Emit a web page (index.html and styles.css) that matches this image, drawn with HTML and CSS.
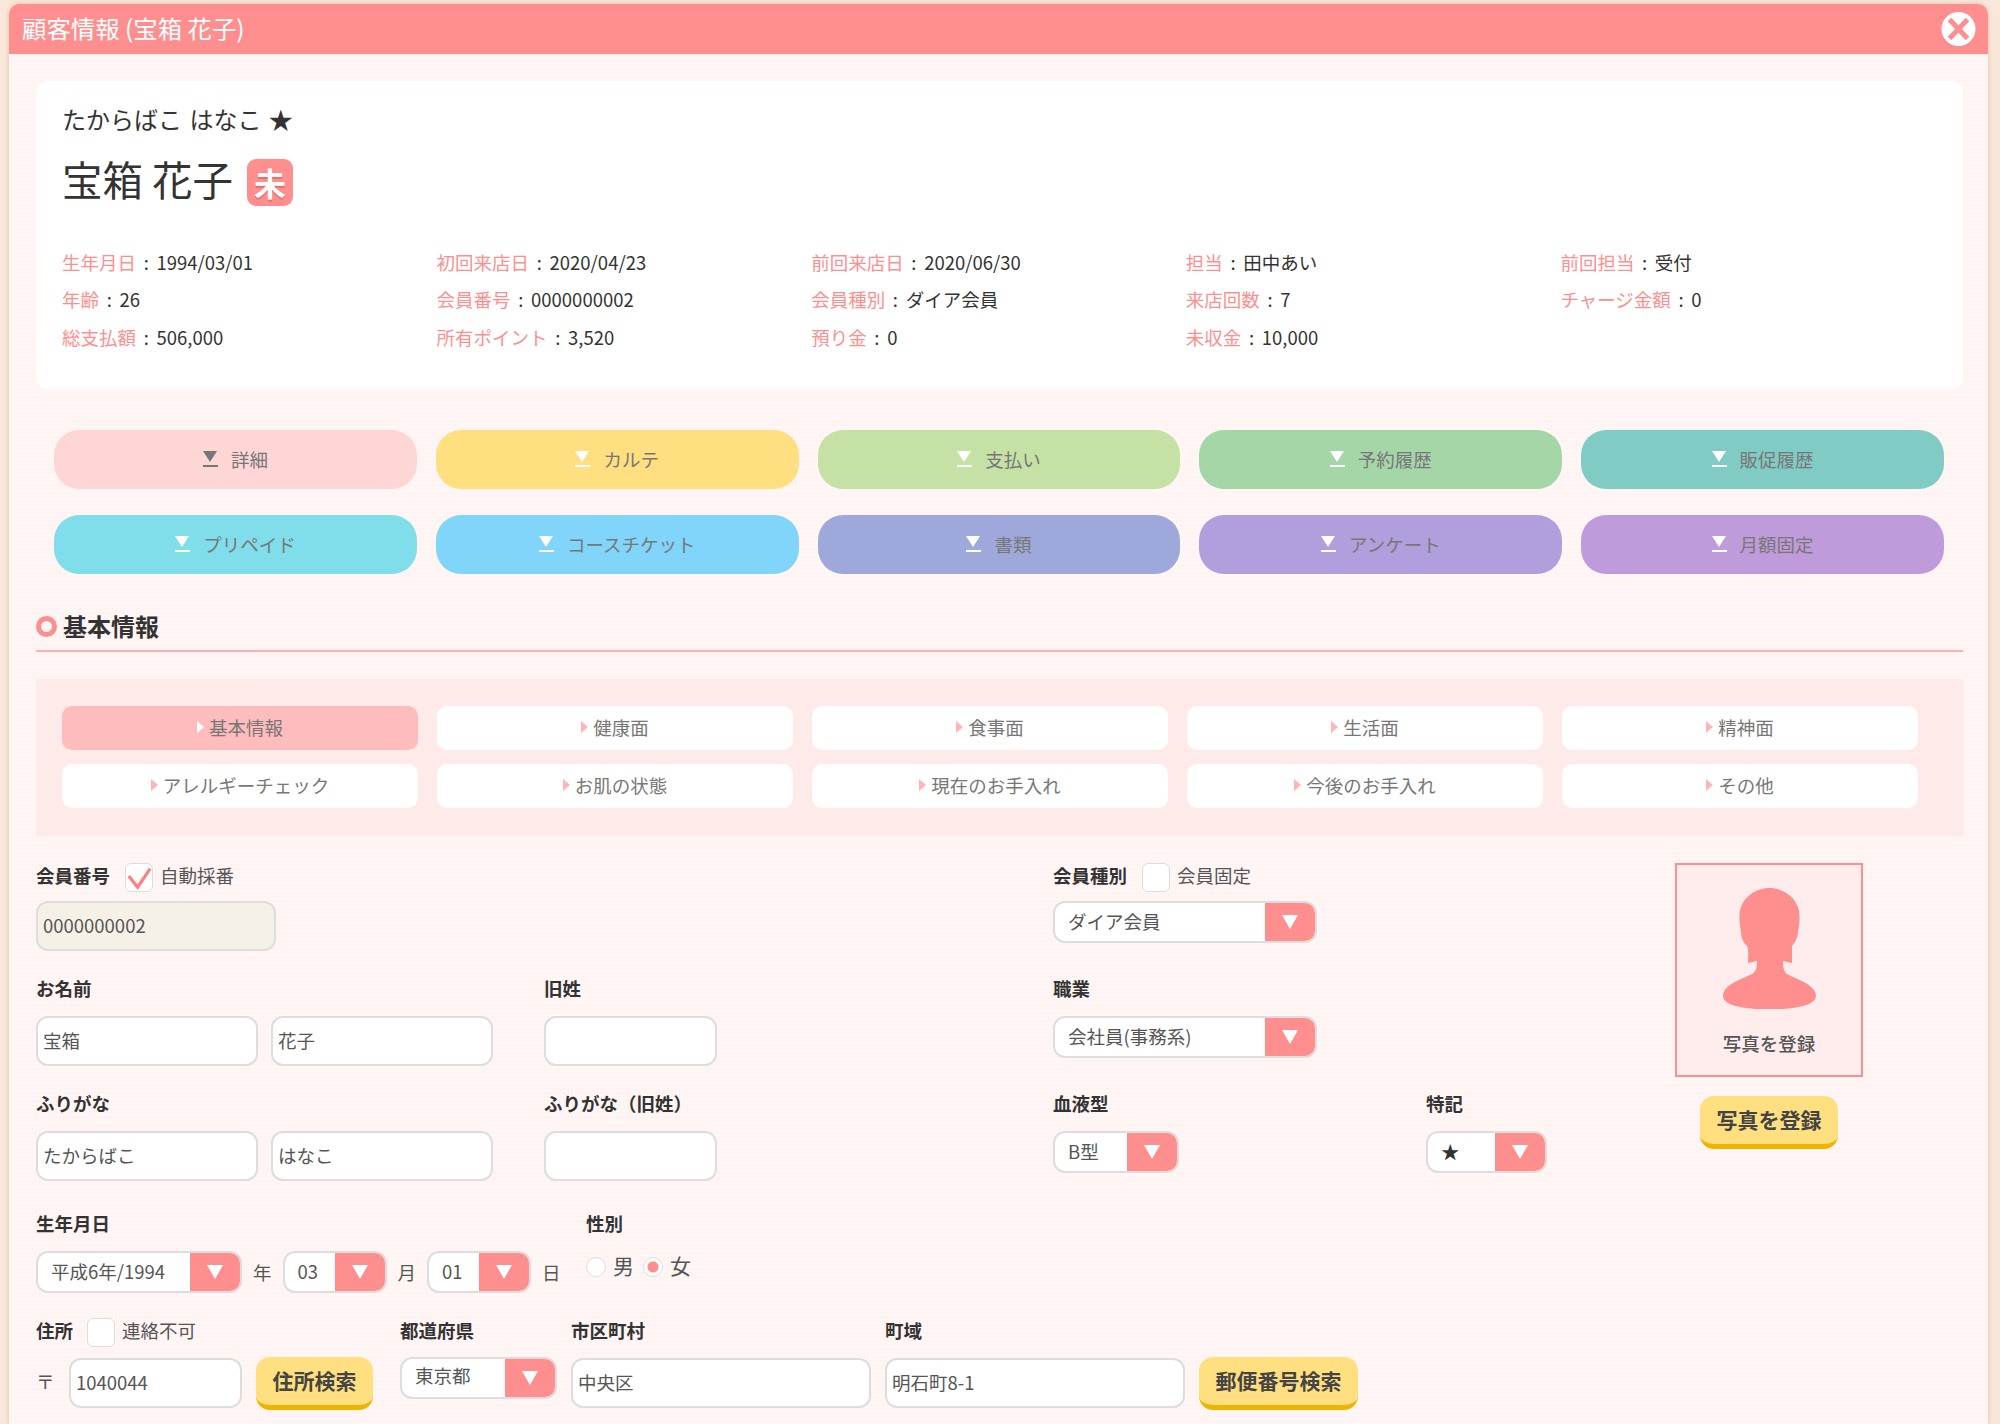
FILE: index.html
```html
<!DOCTYPE html>
<html lang="ja">
<head>
    <meta charset="utf-8">
    <title>顧客情報</title>
    <link rel="stylesheet" href="styles.css">
</head>
<body>

    <div class="modal">
        <div class="modal-head">
            <span class="modal-title">顧客情報 (宝箱 花子)</span>
            <svg class="close-icon" viewBox="0 0 35 34">
                <circle cx="17.5" cy="17" r="17" fill="#fff"/>
                <path d="M8.5 7.5L26.5 26.5M26.5 7.5L8.5 26.5" stroke="#ff8f8f" stroke-width="5" fill="none"/>
            </svg>
        </div>

        <div class="modal-body">
            <!-- customer summary -->
            <div class="summary">
                <div class="kana">たからばこ はなこ ★</div>
                <div class="name"><span class="name-text">宝箱 花子</span><span class="badge">未</span></div>
                <div class="info-grid">
                    <div><span class="key">生年月日</span> : 1994/03/01</div>
                    <div><span class="key">初回来店日</span> : 2020/04/23</div>
                    <div><span class="key">前回来店日</span> : 2020/06/30</div>
                    <div><span class="key">担当</span> : 田中あい</div>
                    <div><span class="key">前回担当</span> : 受付</div>
                    <div><span class="key">年齢</span> : 26</div>
                    <div><span class="key">会員番号</span> : 0000000002</div>
                    <div><span class="key">会員種別</span> : ダイア会員</div>
                    <div><span class="key">来店回数</span> : 7</div>
                    <div><span class="key">チャージ金額</span> : 0</div>
                    <div><span class="key">総支払額</span> : 506,000</div>
                    <div><span class="key">所有ポイント</span> : 3,520</div>
                    <div><span class="key">預り金</span> : 0</div>
                    <div><span class="key">未収金</span> : 10,000</div>
                </div>
            </div>

            <!-- section buttons -->
            <div class="pills">
                <div class="pill pill-pink"><i class="pill-mark"></i>詳細</div>
                <div class="pill pill-yellow"><i class="pill-mark"></i>カルテ</div>
                <div class="pill pill-lime"><i class="pill-mark"></i>支払い</div>
                <div class="pill pill-green"><i class="pill-mark"></i>予約履歴</div>
                <div class="pill pill-teal"><i class="pill-mark"></i>販促履歴</div>
                <div class="pill pill-cyan"><i class="pill-mark"></i>プリペイド</div>
                <div class="pill pill-sky"><i class="pill-mark"></i>コースチケット</div>
                <div class="pill pill-indigo"><i class="pill-mark"></i>書類</div>
                <div class="pill pill-violet"><i class="pill-mark"></i>アンケート</div>
                <div class="pill pill-purple"><i class="pill-mark"></i>月額固定</div>
            </div>

            <h3 class="section-title"><i class="ring"></i>基本情報</h3>

            <div class="tab-panel">
                <div class="tab active">基本情報</div>
                <div class="tab">健康面</div>
                <div class="tab">食事面</div>
                <div class="tab">生活面</div>
                <div class="tab">精神面</div>
                <div class="tab">アレルギーチェック</div>
                <div class="tab">お肌の状態</div>
                <div class="tab">現在のお手入れ</div>
                <div class="tab">今後のお手入れ</div>
                <div class="tab">その他</div>
            </div>

            <div class="form-top">
                <div class="form-rows">
                    <div class="form-row">
                        <div class="cell span-2">
                            <div class="label-line first">
                                <label>会員番号</label>
                                <span class="check">
                                    <svg viewBox="0 0 28 29"><path d="M3 13L12.5 25L26 5" stroke="#ff8080" stroke-width="3.5" fill="none"/></svg>
                                </span>
                                <span class="check-text">自動採番</span>
                            </div>
                            <input class="field field-member" type="text" value="0000000002" readonly>
                        </div>
                        <div class="cell">
                            <div class="label-line first">
                                <label>会員種別</label>
                                <span class="check"></span>
                                <span class="check-text">会員固定</span>
                            </div>
                            <div class="select select-wide"><span>ダイア会員</span><i class="arrow"></i></div>
                        </div>
                    </div>

                    <div class="form-row">
                        <div class="cell">
                            <div class="label-line"><label>お名前</label></div>
                            <div class="pair">
                                <input class="field field-name" type="text" value="宝箱">
                                <input class="field field-name" type="text" value="花子">
                            </div>
                        </div>
                        <div class="cell">
                            <div class="label-line"><label>旧姓</label></div>
                            <input class="field field-old" type="text">
                        </div>
                        <div class="cell span-2">
                            <div class="label-line"><label>職業</label></div>
                            <div class="select select-wide"><span>会社員(事務系)</span><i class="arrow"></i></div>
                        </div>
                    </div>

                    <div class="form-row">
                        <div class="cell">
                            <div class="label-line"><label>ふりがな</label></div>
                            <div class="pair">
                                <input class="field field-name" type="text" value="たからばこ">
                                <input class="field field-name" type="text" value="はなこ">
                            </div>
                        </div>
                        <div class="cell">
                            <div class="label-line"><label>ふりがな（旧姓）</label></div>
                            <input class="field field-old" type="text">
                        </div>
                        <div class="cell">
                            <div class="label-line"><label>血液型</label></div>
                            <div class="select select-blood"><span>B型</span><i class="arrow"></i></div>
                        </div>
                        <div class="cell">
                            <div class="label-line"><label>特記</label></div>
                            <div class="select select-mark"><span>★</span><i class="arrow"></i></div>
                        </div>
                    </div>
                </div>

                <div class="photo-col">
                    <div class="photo-box">
                        <svg class="silhouette" viewBox="0 0 93 121">
                            <path fill="#ff8f8f" d="M46.5 0C60 0 76 10 76.5 27C77 36 75 42 75 44C75 50 71 56 69 58L69 75L60 73C60 80 61 84 64 86C70 90 93 96 93 108C93 115 82 118 70 120C55 122 38 122 23 120C10 118 0 115 0 108C0 96 22 90 29 86C33 84 34 80 34 73L25 75C25 68 26 62 24 58C20 54 18 50 18 44C18 42 16 36 16.5 27C17 10 33 0 46.5 0Z"/>
                        </svg>
                        <div class="photo-text">写真を登録</div>
                    </div>
                    <button class="yellow-btn">写真を登録</button>
                </div>
            </div>

            <div class="birth-row">
                <div>
                    <div class="label-line"><label>生年月日</label></div>
                    <div class="date-line">
                        <div class="select select-year"><span>平成6年/1994</span><i class="arrow"></i></div>
                        <span class="unit">年</span>
                        <div class="select select-day"><span>03</span><i class="arrow"></i></div>
                        <span class="unit">月</span>
                        <div class="select select-day"><span>01</span><i class="arrow"></i></div>
                        <span class="unit">日</span>
                    </div>
                </div>
                <div class="gender">
                    <div class="label-line"><label>性別</label></div>
                    <div class="radio-line">
                        <i class="radio"></i><span>男</span>
                        <i class="radio on"></i><span>女</span>
                    </div>
                </div>
            </div>

            <div class="address-row">
                <div class="addr-main">
                    <div class="label-line">
                        <label>住所</label>
                        <span class="check"></span>
                        <span class="check-text">連絡不可</span>
                    </div>
                    <div class="zip-line">
                        <span class="zip-mark">〒</span>
                        <input class="field field-zip" type="text" value="1040044">
                        <button class="yellow-btn">住所検索</button>
                    </div>
                </div>
                <div class="addr-pref">
                    <div class="label-line"><label>都道府県</label></div>
                    <div class="select select-pref"><span>東京都</span><i class="arrow"></i></div>
                </div>
                <div class="addr-city">
                    <div class="label-line"><label>市区町村</label></div>
                    <input class="field field-city" type="text" value="中央区">
                </div>
                <div class="addr-city">
                    <div class="label-line"><label>町域</label></div>
                    <input class="field field-city" type="text" value="明石町8-1">
                </div>
                <button class="yellow-btn zip-search">郵便番号検索</button>
            </div>
        </div>
    </div>

</body>
</html>
```

FILE: styles.css
```css
html, body {
    height: 1424px;
    overflow: hidden;
}
body {
    margin: 0;
    padding: 4px 12px 0 9px;
    box-sizing: border-box;
    background: #f9e8da;
    font-family: "Noto Sans CJK JP", "Noto Sans", sans-serif;
    font-size: 18.5px;
    color: #333;
}
.modal {
    height: 1420px;
    border-radius: 10px 10px 0 0;
    background-color: #fff3f2;
    background-image:
        repeating-linear-gradient(0deg, rgba(255, 255, 255, 0.2) 0 2px, transparent 2px 4px),
        repeating-linear-gradient(90deg, rgba(255, 255, 255, 0.2) 0 2px, transparent 2px 4px);
    box-shadow: 0 0 5px rgba(205, 140, 95, 0.45);
    overflow: hidden;
}
.modal-head {
    height: 50px;
    padding: 0 12px 0 13px;
    display: flex;
    align-items: center;
    justify-content: space-between;
    background: #ff8f8f;
    color: #fff;
}
.modal-title {
    font-size: 24.4px;
    margin-bottom: 3px;
}
.close-icon {
    width: 35px;
    height: 34px;
}
.modal-body {
    padding: 27px 25px 0 27px;
}

/* summary card */
.summary {
    height: 308px;
    box-sizing: border-box;
    padding: 21px 28px 0 26px;
    background: #fff;
    border-radius: 12px;
}
.kana {
    font-size: 24px;
    line-height: 34px;
    word-spacing: 2px;
}
.name {
    margin-top: 18px;
    height: 56px;
    display: flex;
    align-items: center;
    gap: 14px;
}
.name-text {
    font-size: 40.5px;
    line-height: 50px;
    margin-bottom: 6px;
}
.badge {
    width: 46px;
    height: 47px;
    display: flex;
    align-items: center;
    justify-content: center;
    background: #ff8f8f;
    border-radius: 9px;
    color: #fff;
    font-size: 32px;
    font-weight: bold;
    text-shadow: 0 2px 0 #f06c6c;
}
.info-grid {
    margin-top: 34px;
    display: grid;
    grid-template-columns: repeat(5, 1fr);
    line-height: 37.3px;
    word-spacing: 3.5px;
}
.key {
    color: #ff8f8f;
}

/* coloured section buttons */
.pills {
    margin: 41px 19px 0 18px;
    display: grid;
    grid-template-columns: repeat(5, 1fr);
    gap: 26px 19px;
}
.pill {
    height: 59px;
    box-sizing: border-box;
    padding-bottom: 2px;
    display: flex;
    align-items: center;
    justify-content: center;
    gap: 13px;
    border-radius: 25px;
    color: #777;
}
.pill-mark {
    width: 15px;
    height: 14px;
    position: relative;
    border-bottom: 2px solid #fff;
}
.pill-mark::before {
    content: "";
    position: absolute;
    left: 0;
    top: 0;
    border-left: 7.5px solid transparent;
    border-right: 7.5px solid transparent;
    border-top: 11px solid #fff;
}
.pill-pink { background: #ffd6d6; }
.pill-pink .pill-mark { border-bottom-color: #777; }
.pill-pink .pill-mark::before { border-top-color: #777; }
.pill-yellow { background: #ffdf80; }
.pill-lime { background: #c5e1a5; }
.pill-green { background: #a5d6a7; }
.pill-teal { background: #80cbc4; }
.pill-cyan { background: #80deea; }
.pill-sky { background: #81d4fa; }
.pill-indigo { background: #9fa8da; }
.pill-violet { background: #b09fdc; }
.pill-purple { background: #c09bdb; }

/* section title */
.section-title {
    margin: 34px 0 0;
    height: 42px;
    display: flex;
    align-items: flex-start;
    gap: 6px;
    border-bottom: 2px solid #ffb0b0;
    font-size: 24px;
    font-weight: bold;
    line-height: 36px;
}
.ring {
    width: 21px;
    height: 21px;
    margin-top: 8px;
    box-sizing: border-box;
    border: 5px solid #ff8f8f;
    border-radius: 50%;
}

/* tabs */
.tab-panel {
    margin-top: 27px;
    padding: 27px 26px 28px;
    display: grid;
    grid-template-columns: repeat(5, 356px);
    gap: 14px 19px;
    background: #ffeaea;
}
.tab {
    height: 44px;
    box-sizing: border-box;
    padding-bottom: 2px;
    display: flex;
    align-items: center;
    justify-content: center;
    gap: 5px;
    background: #fff;
    border-radius: 10px;
    color: #777;
}
.tab::before {
    content: "";
    border-left: 7px solid #ffb5b5;
    border-top: 6px solid transparent;
    border-bottom: 6px solid transparent;
}
.tab.active {
    background: #ffbcbc;
}
.tab.active::before {
    border-left-color: #fff;
}

/* form */
.form-top {
    margin-top: 27px;
    display: flex;
    justify-content: space-between;
    padding-right: 100px;
}
.form-rows {
    display: flex;
    flex-direction: column;
    gap: 25px;
}
.form-row {
    display: grid;
    grid-template-columns: 508px 509px 373px 120px;
}
.span-2 {
    grid-column: span 2;
}
.label-line {
    height: 28px;
    margin-bottom: 12px;
    display: flex;
    align-items: center;
}
.label-line.first {
    height: 29px;
    margin-bottom: 9px;
}
.label-line.first label,
.label-line.first .check-text {
    margin-bottom: 6px;
}
label {
    margin-bottom: 4px;
    font-weight: bold;
}
.check {
    width: 28px;
    height: 29px;
    margin: 0 7px 0 15px;
    box-sizing: border-box;
    background: #fff;
    border: 1px solid #ddd;
    border-radius: 6px;
}
.check svg {
    display: block;
    width: 26px;
    height: 27px;
}
.check-text {
    margin-bottom: 4px;
    color: #555;
}
.field {
    height: 50px;
    box-sizing: border-box;
    padding: 0 5px 2px;
    background: #fff;
    border: 2px solid #ddd;
    border-radius: 12px;
    font-family: inherit;
    font-size: 18.5px;
    color: #555;
}
.field-member {
    width: 240px;
    background: #f6f1e6;
}
.field-name {
    width: 222px;
}
.pair {
    display: flex;
    gap: 13px;
}
.field-old {
    width: 173px;
}
.field-zip {
    width: 173px;
}
.field-city {
    width: 300px;
}
.select {
    height: 42px;
    box-sizing: border-box;
    display: flex;
    align-items: center;
    justify-content: space-between;
    padding-left: 13px;
    background: #fff;
    border: 2px solid #ddd;
    border-radius: 12px;
    overflow: hidden;
    color: #555;
}
.select span {
    margin-bottom: 2px;
}
.arrow {
    width: 50px;
    height: 100%;
    display: flex;
    align-items: center;
    justify-content: center;
    background: #ff8f8f;
}
.arrow::before {
    content: "";
    border-left: 8.5px solid transparent;
    border-right: 8.5px solid transparent;
    border-top: 14px solid #fff;
}
.select-wide { width: 264px; }
.select-blood { width: 126px; }
.select-mark { width: 121px; }
.select-mark span { color: #333; }
.select-year { width: 206px; }
.select-day { width: 104px; }
.select-pref {
    width: 157px;
    margin-top: -1px;
}
.select-pref span {
    margin-bottom: 6px;
}

/* photo */
.photo-col {
    width: 188px;
    display: flex;
    flex-direction: column;
    align-items: center;
    gap: 19px;
}
.photo-box {
    width: 188px;
    height: 214px;
    box-sizing: border-box;
    padding-top: 23px;
    display: flex;
    flex-direction: column;
    align-items: center;
    gap: 20px;
    background: #ffeded;
    border: 2px solid #ff8f8f;
}
.silhouette {
    width: 93px;
    height: 121px;
}
.photo-text {
    color: #555;
    font-weight: 500;
    line-height: 28px;
}
.yellow-btn {
    width: 138px;
    height: 53px;
    padding: 0 0 2px;
    background: #ffdf80;
    border: none;
    border-bottom: 5px solid #f0b400;
    border-radius: 14px;
    font-family: inherit;
    font-size: 21px;
    font-weight: bold;
    color: #444;
}

/* birth date */
.birth-row {
    margin-top: 30px;
    display: flex;
}
.date-line {
    width: 550px;
    display: flex;
    align-items: center;
    gap: 11px;
}
.unit {
    color: #555;
}
.radio-line {
    margin-top: -1px;
    display: flex;
    align-items: center;
    gap: 7px;
    font-size: 21px;
    color: #555;
}
.radio {
    width: 20px;
    height: 20px;
    box-sizing: border-box;
    background: #fff;
    border: 1px solid #ddd;
    border-radius: 50%;
}
.radio-line span {
    margin: 0 2px 4px 0;
}
.radio.on {
    background: radial-gradient(circle, #ff8f8f 0 5px, #fff 6px);
}

/* address */
.address-row {
    margin-top: 25px;
    display: flex;
    align-items: flex-start;
}
.addr-main {
    width: 364px;
}
.addr-main .check {
    margin-left: 14px;
}
.zip-line {
    display: flex;
    align-items: flex-start;
}
.zip-mark {
    width: 33px;
    line-height: 46px;
    color: #555;
}
.zip-line .yellow-btn {
    width: 117px;
    margin: -1px 0 0 14px;
}
.addr-pref {
    width: 171px;
}
.addr-city {
    width: 314px;
}
.zip-search {
    width: 159px;
    margin-top: 39px;
}
```
